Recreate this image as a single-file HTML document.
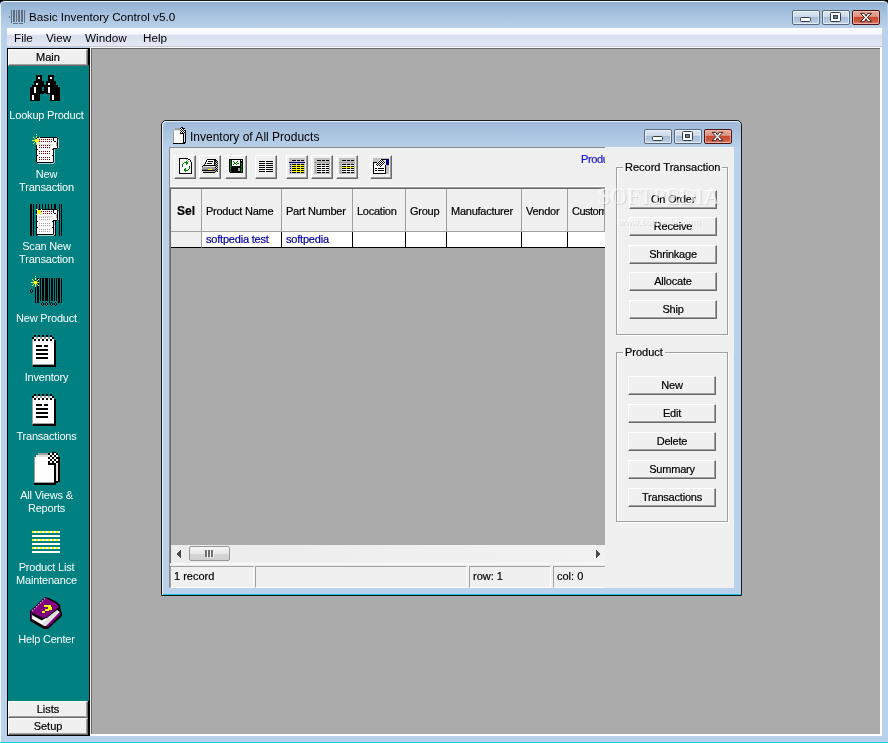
<!DOCTYPE html>
<html><head><meta charset="utf-8">
<style>
*{margin:0;padding:0;box-sizing:border-box}
html,body{width:888px;height:743px;overflow:hidden;background:#000}
body{position:relative;font-family:"Liberation Sans",sans-serif;font-size:11px;color:#000}
.a{position:absolute}
.t{white-space:nowrap;will-change:transform;-webkit-text-stroke:0.2px currentColor}
#frame{left:0;top:0;width:888px;height:743px;background:#b9d1ea;border-radius:5px 5px 0 0;border-top:1px solid #141820;box-shadow:inset 1px 0 #f4f8fc, inset 0 1px #f8fbff}
#titlegrad{left:1px;top:2px;width:886px;height:26px;border-radius:4px 4px 0 0;background:linear-gradient(#92b1d2,#a6c1df 45%,#b9d1ea)}
#bottomline{left:0;top:742px;width:888px;height:1px;background:#1ecbe6}
#title{left:29px;top:10px;font-size:11.7px;-webkit-text-stroke:0 !important}
.cap{height:15px;border:1px solid #566a80;border-radius:2px;background:linear-gradient(#dde7f2 0%,#cedbeb 42%,#a8bed6 46%,#b4c9e0 80%,#c4d6ea 100%);box-shadow:inset 0 0 0 1px rgba(255,255,255,.55)}
.capx{border-color:#4a1414;background:linear-gradient(#e9ab9c 0%,#dc9282 42%,#c8472c 46%,#cd5a40 80%,#da8a78 100%);box-shadow:inset 0 0 0 1px rgba(255,200,190,.6)}
#menubar{left:7px;top:28px;width:875px;height:18px;background:linear-gradient(#fdfdff 0%,#f4f6fb 34%,#d8deee 42%,#e4e7f4 100%)}
#menuline{left:7px;top:46px;width:875px;height:1px;background:#c6c8d4}
.menu{top:31px;font-size:11.7px;-webkit-text-stroke:0 !important}
#side{left:7px;top:48px;width:83px;height:688px;background:#000}
#teal{left:8px;top:65px;width:81px;height:636px;background:#008080}
.sbtn{left:8px;width:80px;height:17px;background:#f0f0f0;border-style:solid;border-width:1px;border-color:#fff #696969 #696969 #fff;box-shadow:inset -1px -1px #a0a0a0;text-align:center;font-size:11px;line-height:14px}
.lbl{color:#fff;text-align:center;width:81px;left:6px;font-size:11px;line-height:13px;letter-spacing:-0.2px;-webkit-text-stroke:0 !important}
#mdi{left:90px;top:47px;width:792px;height:689px;background:#ababab;border-style:solid;border-width:1px 2px 2px 1px;border-color:#fafafa #fff #fff #f0f0f0;box-shadow:inset 1px 1px #6a6a6a}
/* child */
#child{left:161px;top:120px;width:581px;height:476px;background:#b9d1ea;border:1px solid #1a1a1a;border-radius:5px 5px 0 0;box-shadow:inset 1px 1px #e4eef8, inset 0 -1px #18c0e0}
#ctitlegrad{left:1px;top:1px;width:578px;height:26px;border-radius:5px 5px 0 0;background:linear-gradient(#9fbad9,#abc4e0 45%,#b9d1ea)}
#client{left:169px;top:147px;width:565px;height:441px;background:#f0f0f0;border-top:1px solid #8a8a8a;border-left:1px solid #8a8a8a}
.tb{width:22px;height:24px;background:#f0f0f0;border-style:solid;border-width:1px;border-color:#fff #696969 #696969 #fff;box-shadow:inset -1px -1px #a0a0a0}
#tbsep{left:170px;top:186px;width:435px;height:2px;background:#fff;border-bottom:1px solid #9a9a9a}
#grid{left:170px;top:188px;width:435px;height:357px;background:#ababab;border-top:1px solid #696969;border-left:1px solid #696969}
.hd{top:189px;height:43px;padding-top:1px;background:#f0f0f0;border-right:1px solid #a0a0a0;border-bottom:1px solid #a0a0a0;line-height:42px;padding-left:4px;white-space:nowrap;overflow:hidden;letter-spacing:-0.25px}
.cell{top:232px;height:16px;background:#fff;border-right:1px solid #000;border-bottom:1px solid #000;color:#0000a0;padding-left:4px;line-height:15px;white-space:nowrap;letter-spacing:-0.2px}
#hscroll{left:170px;top:545px;width:435px;height:18px;background:linear-gradient(90deg,#ececec,#f2f2f2)}
#thumb{left:189px;top:546px;width:41px;height:15px;border:1px solid #979797;border-radius:2px;background:linear-gradient(#f6f6f6 0%,#e6e6e6 50%,#d6d6d6 51%,#d0d0d0 100%)}
#sbline{left:170px;top:563px;width:436px;height:3px;background:#f0f0f0;border-top:1px solid #fff}
.sp{top:566px;height:22px;background:#f0f0f0;border-style:solid;border-width:1px;border-color:#a0a0a0 #fff #fff #a0a0a0;padding-left:3px;line-height:19px;white-space:nowrap}
#rpanel{left:605px;top:147px;width:129px;height:441px;background:#f0f0f0}
.grp{border:1px solid #a0a0a0;box-shadow:1px 1px 0 #fff inset, 1px 1px 0 #fff}
.glbl{background:#f0f0f0;padding:0 2px;font-size:11px;line-height:13px}
.btn{width:88px;height:19px;background:#f0f0f0;border-style:solid;border-width:1px;border-color:#fff #696969 #696969 #fff;box-shadow:inset -1px -1px #a0a0a0;text-align:center;line-height:16px;font-size:11px;letter-spacing:-0.2px}
.wm{color:rgba(255,255,255,.55);text-shadow:1px 1px 0 rgba(0,0,0,.10),-1px -1px 0 rgba(255,255,255,.4);white-space:nowrap}
</style></head><body>
<div class="a" id="frame"></div>
<div class="a" id="titlegrad"></div>
<div class="a" id="bottomline"></div>
<div class="a t" id="title">Basic Inventory Control v5.0</div>
<div class="a cap" style="left:792px;top:10px;width:28px"></div>
<div class="a cap" style="left:822px;top:10px;width:28px"></div>
<div class="a cap capx" style="left:852px;top:10px;width:28px"></div>
<svg class="a" style="left:792px;top:10px" width="90" height="15" viewBox="792 10 90 15">
 <rect x="800.5" y="17.5" width="10" height="4" rx="1" fill="#fff" stroke="#333c48"/>
 <rect x="830.5" y="12.5" width="10" height="9" rx="1" fill="#fff" stroke="#333c48"/>
 <rect x="833.5" y="15.5" width="4" height="3" fill="#6a7f98" stroke="#333c48"/>
 <polygon fill="#fff" stroke="#3c1c1c" stroke-width="1" stroke-linejoin="round" points="860.5,13.3 864.3,13.3 866.0,16.2 867.7,13.3 871.5,13.3 867.5,17.5 871.5,21.7 867.7,21.7 866.0,18.8 864.3,21.7 860.5,21.7 864.5,17.5"/>
</svg>
<div class="a" id="menubar"></div>
<div class="a" id="menuline"></div>
<div class="a menu t" style="left:14px">File</div>
<div class="a menu t" style="left:46px">View</div>
<div class="a menu t" style="left:85px">Window</div>
<div class="a menu t" style="left:143px">Help</div>

<div class="a" id="side"></div>
<div class="a" id="teal"></div>
<div class="a sbtn t" style="top:49px">Main</div>
<div class="a sbtn t" style="top:701px">Lists</div>
<div class="a sbtn t" style="top:718px">Setup</div>

<div class="a lbl t" style="top:109px">Lookup Product</div>
<div class="a lbl t" style="top:168px">New<br>Transaction</div>
<div class="a lbl t" style="top:240px">Scan New<br>Transaction</div>
<div class="a lbl t" style="top:312px">New Product</div>
<div class="a lbl t" style="top:371px">Inventory</div>
<div class="a lbl t" style="top:430px">Transactions</div>
<div class="a lbl t" style="top:489px">All Views &amp;<br>Reports</div>
<div class="a lbl t" style="top:561px">Product List<br>Maintenance</div>
<div class="a lbl t" style="top:633px">Help Center</div>

<div class="a" id="mdi"></div>

<div class="a" id="child"><div class="a" id="ctitlegrad"></div></div>
<div class="a t" style="left:190px;top:130px;font-size:12px;-webkit-text-stroke:0">Inventory of All Products</div>
<div class="a cap" style="left:644px;top:129px;width:28px;height:15px"></div>
<div class="a cap" style="left:674px;top:129px;width:28px;height:15px"></div>
<div class="a cap capx" style="left:704px;top:129px;width:28px;height:15px"></div>
<svg class="a" style="left:644px;top:129px" width="90" height="15" viewBox="644 129 90 15">
 <rect x="652.5" y="136.5" width="10" height="4" rx="1" fill="#fff" stroke="#333c48"/>
 <rect x="682.5" y="131.5" width="10" height="9" rx="1" fill="#fff" stroke="#333c48"/>
 <rect x="685.5" y="134.5" width="4" height="3" fill="#6a7f98" stroke="#333c48"/>
 <polygon fill="#fff" stroke="#3c1c1c" stroke-width="1" stroke-linejoin="round" points="712.0,132.3 715.8,132.3 717.5,135.2 719.2,132.3 723.0,132.3 719.0,136.5 723.0,140.7 719.2,140.7 717.5,137.8 715.8,140.7 712.0,140.7 716.0,136.5"/>
</svg>
<div class="a" id="client"></div>

<div class="a tb" style="left:174px;top:155px"></div>
<div class="a tb" style="left:199px;top:155px"></div>
<div class="a tb" style="left:225px;top:155px"></div>
<div class="a tb" style="left:255px;top:155px"></div>
<div class="a tb" style="left:286px;top:155px"></div>
<div class="a tb" style="left:311px;top:155px"></div>
<div class="a tb" style="left:336px;top:155px"></div>
<div class="a tb" style="left:370px;top:155px"></div>

<div class="a" id="tbsep"></div>
<div class="a" id="grid"></div>
<div class="a hd t" style="left:171px;width:31px;font-weight:bold;font-size:12px;text-align:center;padding:1px 0 0 0;letter-spacing:0">Sel</div>
<div class="a hd t" style="left:202px;width:80px">Product Name</div>
<div class="a hd t" style="left:282px;width:71px">Part Number</div>
<div class="a hd t" style="left:353px;width:53px">Location</div>
<div class="a hd t" style="left:406px;width:41px">Group</div>
<div class="a hd t" style="left:447px;width:75px">Manufacturer</div>
<div class="a hd t" style="left:522px;width:46px">Vendor</div>
<div class="a hd t" style="left:568px;width:37px;letter-spacing:-0.5px">Customer</div>
<div class="a cell" style="left:171px;width:31px;background:#f0f0f0;border-right:1px solid #a0a0a0;border-bottom:1px solid #000"></div>
<div class="a cell t" style="left:202px;width:80px">softpedia test</div>
<div class="a cell t" style="left:282px;width:71px">softpedia</div>
<div class="a cell" style="left:353px;width:53px"></div>
<div class="a cell" style="left:406px;width:41px"></div>
<div class="a cell" style="left:447px;width:75px"></div>
<div class="a cell" style="left:522px;width:46px"></div>
<div class="a cell" style="left:568px;width:40px"></div>

<div class="a" id="hscroll"></div>
<div class="a" id="thumb"></div>
<svg class="a" style="left:170px;top:545px" width="436" height="18" viewBox="170 545 436 18" shape-rendering="crispEdges">
 <path fill="#4a4a4a" d="M177 553h1v2h-1z M178 552h1v4h-1z M179 551h1v6h-1z M180 550h1v8h-1z"/>
 <path fill="#4a4a4a" d="M599 553h1v2h-1z M598 552h1v4h-1z M597 551h1v6h-1z M596 550h1v8h-1z"/>
 <path fill="#707070" d="M205 550h2v7h-2z M208 550h2v7h-2z M211 550h2v7h-2z"/>
 <path fill="#fafafa" d="M207 551h1v7h-1z M210 551h1v7h-1z M213 551h1v7h-1z"/>
 <path fill="#6a6a6a" d="M170 545h1v18h-1z"/>
</svg>
<div class="a" id="sbline"></div>
<div class="a sp t" style="left:170px;width:84px">1 record</div>
<div class="a sp" style="left:255px;width:212px"></div>
<div class="a sp t" style="left:469px;width:82px">row: 1</div>
<div class="a sp t" style="left:553px;width:53px">col: 0</div>

<div class="a t" style="left:581px;top:153px;color:#1010c8;letter-spacing:-0.4px">Produ</div>

<div class="a" id="rpanel"></div>
<div class="a grp" style="left:616px;top:167px;width:112px;height:168px"></div>
<div class="a glbl t" style="left:623px;top:161px">Record Transaction</div>
<div class="a btn t" style="left:629px;top:190px">On Order</div>
<div class="a btn t" style="left:629px;top:217px">Receive</div>
<div class="a btn t" style="left:629px;top:245px">Shrinkage</div>
<div class="a btn t" style="left:629px;top:272px">Allocate</div>
<div class="a btn t" style="left:629px;top:300px">Ship</div>

<div class="a grp" style="left:616px;top:352px;width:112px;height:170px"></div>
<div class="a glbl t" style="left:623px;top:346px">Product</div>
<div class="a btn t" style="left:628px;top:376px">New</div>
<div class="a btn t" style="left:628px;top:404px">Edit</div>
<div class="a btn t" style="left:628px;top:432px">Delete</div>
<div class="a btn t" style="left:628px;top:460px">Summary</div>
<div class="a btn t" style="left:628px;top:488px">Transactions</div>

<div class="a wm" style="left:598px;top:184px;font-family:'Liberation Serif',serif;font-size:22.6px">SOFTPEDIA</div>
<div class="a wm" style="left:618px;top:216px;font-size:9.6px">www.softpedia.com</div>
<svg class="a" style="left:9px;top:10px" width="17" height="15" viewBox="0 0 17 15" shape-rendering="crispEdges"><path fill="#5f6f80" d="M2 0h1v1h-1zM4 0h2v1h-2zM7 0h1v1h-1zM9 0h2v1h-2zM12 0h2v1h-2zM15 0h1v1h-1zM2 1h1v1h-1zM4 1h2v1h-2zM7 1h1v1h-1zM9 1h2v1h-2zM12 1h2v1h-2zM15 1h1v1h-1zM2 2h1v1h-1zM4 2h2v1h-2zM7 2h1v1h-1zM9 2h2v1h-2zM12 2h2v1h-2zM15 2h1v1h-1zM2 3h1v1h-1zM4 3h2v1h-2zM7 3h1v1h-1zM9 3h2v1h-2zM12 3h2v1h-2zM15 3h1v1h-1zM2 4h1v1h-1zM4 4h2v1h-2zM7 4h1v1h-1zM9 4h2v1h-2zM12 4h2v1h-2zM15 4h1v1h-1zM2 5h1v1h-1zM4 5h2v1h-2zM7 5h1v1h-1zM9 5h2v1h-2zM12 5h2v1h-2zM15 5h1v1h-1zM0 6h1v1h-1zM2 6h1v1h-1zM4 6h2v1h-2zM7 6h1v1h-1zM9 6h2v1h-2zM12 6h2v1h-2zM15 6h1v1h-1zM0 7h1v1h-1zM2 7h1v1h-1zM4 7h2v1h-2zM7 7h1v1h-1zM9 7h2v1h-2zM12 7h2v1h-2zM15 7h1v1h-1zM2 8h1v1h-1zM4 8h2v1h-2zM7 8h1v1h-1zM9 8h2v1h-2zM12 8h2v1h-2zM15 8h1v1h-1zM2 9h1v1h-1zM4 9h2v1h-2zM7 9h1v1h-1zM9 9h2v1h-2zM12 9h2v1h-2zM15 9h1v1h-1zM2 10h1v1h-1zM4 10h2v1h-2zM7 10h1v1h-1zM9 10h2v1h-2zM12 10h2v1h-2zM15 10h1v1h-1zM2 11h1v1h-1zM4 11h2v1h-2zM7 11h1v1h-1zM9 11h2v1h-2zM12 11h2v1h-2zM15 11h1v1h-1zM2 12h1v1h-1zM15 12h1v1h-1zM4 13h5v1h-5zM10 13h4v1h-4z"/></svg>
<svg class="a" style="left:30px;top:75px" width="30" height="26" viewBox="0 0 30 26" shape-rendering="crispEdges"><path fill="#000000" d="M6 0h6v1h-6zM18 0h6v1h-6zM6 1h6v1h-6zM18 1h6v1h-6zM6 2h2v1h-2zM10 2h2v1h-2zM18 2h2v1h-2zM22 2h2v1h-2zM6 3h2v1h-2zM10 3h2v1h-2zM18 3h2v1h-2zM22 3h2v1h-2zM6 4h6v1h-6zM18 4h6v1h-6zM6 5h6v1h-6zM18 5h6v1h-6zM4 6h10v1h-10zM16 6h10v1h-10zM4 7h10v1h-10zM16 7h10v1h-10zM4 8h2v1h-2zM8 8h6v1h-6zM16 8h2v1h-2zM20 8h6v1h-6zM4 9h2v1h-2zM8 9h6v1h-6zM16 9h2v1h-2zM20 9h6v1h-6zM2 10h26v1h-26zM2 11h26v1h-26zM0 12h4v1h-4zM6 12h6v1h-6zM14 12h4v1h-4zM20 12h10v1h-10zM0 13h4v1h-4zM6 13h6v1h-6zM14 13h4v1h-4zM20 13h10v1h-10zM0 14h4v1h-4zM6 14h6v1h-6zM14 14h4v1h-4zM20 14h10v1h-10zM0 15h4v1h-4zM6 15h6v1h-6zM14 15h4v1h-4zM20 15h10v1h-10zM0 16h4v1h-4zM6 16h12v1h-12zM20 16h10v1h-10zM0 17h4v1h-4zM6 17h12v1h-12zM20 17h10v1h-10zM0 18h14v1h-14zM16 18h14v1h-14zM0 19h10v1h-10zM20 19h10v1h-10zM0 20h2v1h-2zM4 20h6v1h-6zM20 20h2v1h-2zM24 20h6v1h-6zM0 21h2v1h-2zM4 21h6v1h-6zM20 21h2v1h-2zM24 21h6v1h-6zM0 22h2v1h-2zM4 22h6v1h-6zM20 22h2v1h-2zM24 22h6v1h-6zM0 23h2v1h-2zM4 23h6v1h-6zM20 23h2v1h-2zM24 23h6v1h-6zM0 24h2v1h-2zM4 24h6v1h-6zM20 24h2v1h-2zM24 24h6v1h-6zM0 25h10v1h-10zM20 25h10v1h-10z"/><path fill="#ffffff" d="M8 2h2v1h-2zM20 2h2v1h-2zM8 3h2v1h-2zM20 3h2v1h-2zM6 8h2v1h-2zM18 8h2v1h-2zM6 9h2v1h-2zM18 9h2v1h-2zM4 12h2v1h-2zM18 12h2v1h-2zM4 13h2v1h-2zM18 13h2v1h-2zM4 14h2v1h-2zM18 14h2v1h-2zM4 15h2v1h-2zM18 15h2v1h-2zM4 16h2v1h-2zM18 16h2v1h-2zM4 17h2v1h-2zM18 17h2v1h-2zM2 20h2v1h-2zM22 20h2v1h-2zM2 21h2v1h-2zM22 21h2v1h-2zM2 22h2v1h-2zM22 22h2v1h-2zM2 23h2v1h-2zM22 23h2v1h-2zM2 24h2v1h-2zM22 24h2v1h-2z"/></svg>
<svg class="a" style="left:30px;top:132px" width="30" height="33" viewBox="0 0 30 33" shape-rendering="crispEdges"><path fill="#c8f060" d="M6 2h1v1h-1zM6 4h1v1h-1zM3 5h1v1h-1zM6 5h1v1h-1zM9 5h1v1h-1zM4 6h1v1h-1zM8 6h1v1h-1zM2 8h3v1h-3zM8 8h2v1h-2zM4 10h1v1h-1zM6 10h1v1h-1zM8 10h1v1h-1zM3 11h1v1h-1zM6 11h1v1h-1zM9 11h1v1h-1zM6 12h1v1h-1z"/><path fill="#000000" d="M7 5h2v1h-2zM10 5h17v1h-17zM6 6h1v1h-1zM23 6h1v1h-1zM27 6h1v1h-1zM23 7h1v1h-1zM27 7h1v1h-1zM23 8h1v1h-1zM27 8h1v1h-1zM24 9h2v1h-2zM27 9h1v1h-1zM27 10h1v1h-1zM27 11h1v1h-1zM27 12h1v1h-1zM6 13h1v1h-1zM27 13h1v1h-1zM6 14h1v1h-1zM27 14h1v1h-1zM6 15h1v1h-1zM27 15h1v1h-1zM6 16h1v1h-1zM23 16h4v1h-4zM6 17h2v1h-2zM22 17h2v1h-2zM6 18h1v1h-1zM23 18h1v1h-1zM6 19h1v1h-1zM23 19h1v1h-1zM6 20h1v1h-1zM23 20h1v1h-1zM6 21h1v1h-1zM23 21h1v1h-1zM6 22h1v1h-1zM23 22h1v1h-1zM6 23h2v1h-2zM22 23h2v1h-2zM6 24h1v1h-1zM23 24h1v1h-1zM6 25h1v1h-1zM23 25h1v1h-1zM6 26h1v1h-1zM23 26h1v1h-1zM6 27h1v1h-1zM23 27h1v1h-1zM6 28h1v1h-1zM23 28h1v1h-1zM6 29h1v1h-1zM23 29h1v1h-1zM7 30h16v1h-16z"/><path fill="#ffffff" d="M7 6h1v1h-1zM9 6h14v1h-14zM24 6h3v1h-3zM8 7h1v1h-1zM10 7h1v1h-1zM12 7h1v1h-1zM14 7h1v1h-1zM16 7h1v1h-1zM18 7h1v1h-1zM20 7h1v1h-1zM22 7h1v1h-1zM24 7h3v1h-3zM10 8h13v1h-13zM24 8h3v1h-3zM8 9h1v1h-1zM10 9h1v1h-1zM12 9h1v1h-1zM14 9h1v1h-1zM16 9h1v1h-1zM18 9h1v1h-1zM20 9h1v1h-1zM22 9h2v1h-2zM26 9h1v1h-1zM7 10h1v1h-1zM9 10h17v1h-17zM7 11h2v1h-2zM10 11h16v1h-16zM23 12h3v1h-3zM7 13h2v1h-2zM10 13h1v1h-1zM12 13h1v1h-1zM14 13h1v1h-1zM16 13h1v1h-1zM18 13h1v1h-1zM20 13h6v1h-6zM7 14h20v1h-20zM7 15h2v1h-2zM10 15h1v1h-1zM12 15h1v1h-1zM14 15h1v1h-1zM16 15h1v1h-1zM18 15h1v1h-1zM20 15h7v1h-7zM7 16h16v1h-16zM8 17h14v1h-14zM7 18h16v1h-16zM7 19h2v1h-2zM10 19h1v1h-1zM12 19h1v1h-1zM14 19h1v1h-1zM16 19h1v1h-1zM18 19h1v1h-1zM20 19h3v1h-3zM7 20h16v1h-16zM7 21h2v1h-2zM10 21h1v1h-1zM12 21h1v1h-1zM14 21h1v1h-1zM16 21h1v1h-1zM18 21h1v1h-1zM20 21h3v1h-3zM7 22h16v1h-16zM8 23h14v1h-14zM7 24h16v1h-16zM7 25h2v1h-2zM10 25h1v1h-1zM12 25h1v1h-1zM14 25h1v1h-1zM16 25h1v1h-1zM18 25h1v1h-1zM20 25h3v1h-3zM7 26h16v1h-16zM7 27h2v1h-2zM10 27h1v1h-1zM12 27h1v1h-1zM14 27h1v1h-1zM16 27h1v1h-1zM18 27h1v1h-1zM20 27h3v1h-3zM7 28h16v1h-16zM7 29h16v1h-16z"/><path fill="#ffff00" d="M5 7h3v1h-3zM5 8h3v1h-3zM5 9h3v1h-3z"/><path fill="#800000" d="M9 7h1v1h-1zM11 7h1v1h-1zM13 7h1v1h-1zM15 7h1v1h-1zM17 7h1v1h-1zM19 7h1v1h-1zM21 7h1v1h-1zM9 9h1v1h-1zM11 9h1v1h-1zM13 9h1v1h-1zM15 9h1v1h-1zM17 9h1v1h-1zM19 9h1v1h-1zM21 9h1v1h-1zM9 13h1v1h-1zM11 13h1v1h-1zM13 13h1v1h-1zM15 13h1v1h-1zM17 13h1v1h-1zM19 13h1v1h-1zM9 15h1v1h-1zM11 15h1v1h-1zM13 15h1v1h-1zM15 15h1v1h-1zM17 15h1v1h-1zM19 15h1v1h-1zM9 19h1v1h-1zM11 19h1v1h-1zM13 19h1v1h-1zM15 19h1v1h-1zM17 19h1v1h-1zM19 19h1v1h-1zM9 21h1v1h-1zM11 21h1v1h-1zM13 21h1v1h-1zM15 21h1v1h-1zM17 21h1v1h-1zM19 21h1v1h-1zM9 25h1v1h-1zM11 25h1v1h-1zM13 25h1v1h-1zM15 25h1v1h-1zM17 25h1v1h-1zM19 25h1v1h-1zM9 27h1v1h-1zM11 27h1v1h-1zM13 27h1v1h-1zM15 27h1v1h-1zM17 27h1v1h-1zM19 27h1v1h-1z"/><path fill="#a8d0d8" d="M28 7h1v1h-1zM28 8h1v1h-1zM28 9h1v1h-1zM28 10h1v1h-1zM28 11h1v1h-1zM28 12h1v1h-1zM28 13h1v1h-1zM28 14h1v1h-1zM28 15h1v1h-1zM24 17h1v1h-1zM24 18h1v1h-1zM24 19h1v1h-1zM24 20h1v1h-1zM24 21h1v1h-1zM24 22h1v1h-1zM24 23h1v1h-1zM24 24h1v1h-1zM24 25h1v1h-1zM24 26h1v1h-1zM24 27h1v1h-1zM24 28h1v1h-1zM24 29h1v1h-1zM24 30h1v1h-1zM8 31h16v1h-16z"/><path fill="#a0a0a0" d="M26 10h1v1h-1zM26 11h1v1h-1zM26 12h1v1h-1zM26 13h1v1h-1z"/><path fill="#e0e0e0" d="M7 12h16v1h-16z"/></svg>
<svg class="a" style="left:30px;top:204px" width="33" height="33" viewBox="0 0 33 33" shape-rendering="crispEdges"><path fill="#000000" d="M0 0h2v1h-2zM3 0h1v1h-1zM6 0h1v1h-1zM9 0h1v1h-1zM12 0h1v1h-1zM15 0h1v1h-1zM18 0h1v1h-1zM21 0h1v1h-1zM24 0h2v1h-2zM29 0h1v1h-1zM31 0h1v1h-1zM0 1h2v1h-2zM3 1h1v1h-1zM6 1h1v1h-1zM9 1h1v1h-1zM12 1h1v1h-1zM15 1h1v1h-1zM18 1h1v1h-1zM21 1h1v1h-1zM24 1h2v1h-2zM29 1h1v1h-1zM31 1h1v1h-1zM0 2h2v1h-2zM3 2h1v1h-1zM6 2h1v1h-1zM9 2h1v1h-1zM12 2h1v1h-1zM15 2h1v1h-1zM18 2h1v1h-1zM21 2h1v1h-1zM24 2h2v1h-2zM29 2h1v1h-1zM31 2h1v1h-1zM0 3h2v1h-2zM3 3h1v1h-1zM6 3h1v1h-1zM9 3h1v1h-1zM12 3h1v1h-1zM15 3h1v1h-1zM18 3h1v1h-1zM21 3h1v1h-1zM24 3h2v1h-2zM29 3h1v1h-1zM31 3h1v1h-1zM0 4h2v1h-2zM3 4h1v1h-1zM6 4h1v1h-1zM9 4h1v1h-1zM12 4h1v1h-1zM15 4h1v1h-1zM18 4h1v1h-1zM21 4h1v1h-1zM24 4h2v1h-2zM29 4h1v1h-1zM31 4h1v1h-1zM0 5h2v1h-2zM3 5h1v1h-1zM8 5h3v1h-3zM12 5h15v1h-15zM29 5h1v1h-1zM31 5h1v1h-1zM0 6h2v1h-2zM3 6h1v1h-1zM6 6h1v1h-1zM23 6h1v1h-1zM27 6h1v1h-1zM29 6h1v1h-1zM31 6h1v1h-1zM0 7h2v1h-2zM3 7h1v1h-1zM6 7h1v1h-1zM23 7h1v1h-1zM27 7h1v1h-1zM29 7h1v1h-1zM31 7h1v1h-1zM0 8h2v1h-2zM3 8h1v1h-1zM6 8h1v1h-1zM23 8h1v1h-1zM27 8h1v1h-1zM29 8h1v1h-1zM31 8h1v1h-1zM0 9h2v1h-2zM3 9h1v1h-1zM6 9h1v1h-1zM24 9h2v1h-2zM27 9h1v1h-1zM29 9h1v1h-1zM31 9h1v1h-1zM0 10h2v1h-2zM3 10h1v1h-1zM27 10h1v1h-1zM29 10h1v1h-1zM31 10h1v1h-1zM0 11h2v1h-2zM3 11h1v1h-1zM6 11h1v1h-1zM27 11h1v1h-1zM29 11h1v1h-1zM31 11h1v1h-1zM0 12h2v1h-2zM3 12h1v1h-1zM6 12h1v1h-1zM27 12h1v1h-1zM29 12h1v1h-1zM31 12h1v1h-1zM0 13h2v1h-2zM3 13h1v1h-1zM6 13h1v1h-1zM27 13h1v1h-1zM29 13h1v1h-1zM31 13h1v1h-1zM0 14h2v1h-2zM3 14h1v1h-1zM6 14h1v1h-1zM27 14h1v1h-1zM29 14h1v1h-1zM31 14h1v1h-1zM0 15h2v1h-2zM3 15h1v1h-1zM6 15h1v1h-1zM27 15h1v1h-1zM29 15h1v1h-1zM31 15h1v1h-1zM0 16h2v1h-2zM3 16h1v1h-1zM6 16h1v1h-1zM23 16h4v1h-4zM29 16h1v1h-1zM31 16h1v1h-1zM0 17h2v1h-2zM3 17h1v1h-1zM6 17h2v1h-2zM22 17h2v1h-2zM25 17h1v1h-1zM29 17h1v1h-1zM31 17h1v1h-1zM0 18h2v1h-2zM3 18h1v1h-1zM6 18h1v1h-1zM23 18h1v1h-1zM25 18h1v1h-1zM29 18h1v1h-1zM31 18h1v1h-1zM0 19h2v1h-2zM3 19h1v1h-1zM6 19h1v1h-1zM23 19h1v1h-1zM25 19h1v1h-1zM29 19h1v1h-1zM31 19h1v1h-1zM0 20h2v1h-2zM3 20h1v1h-1zM6 20h1v1h-1zM23 20h1v1h-1zM25 20h1v1h-1zM29 20h1v1h-1zM31 20h1v1h-1zM0 21h2v1h-2zM3 21h1v1h-1zM6 21h1v1h-1zM23 21h1v1h-1zM25 21h1v1h-1zM29 21h1v1h-1zM31 21h1v1h-1zM0 22h2v1h-2zM3 22h1v1h-1zM6 22h1v1h-1zM23 22h1v1h-1zM25 22h1v1h-1zM29 22h1v1h-1zM31 22h1v1h-1zM0 23h2v1h-2zM3 23h1v1h-1zM6 23h2v1h-2zM22 23h2v1h-2zM25 23h1v1h-1zM29 23h1v1h-1zM31 23h1v1h-1zM0 24h2v1h-2zM3 24h1v1h-1zM6 24h1v1h-1zM23 24h1v1h-1zM25 24h1v1h-1zM29 24h1v1h-1zM31 24h1v1h-1zM0 25h2v1h-2zM3 25h1v1h-1zM6 25h1v1h-1zM23 25h1v1h-1zM25 25h1v1h-1zM29 25h1v1h-1zM31 25h1v1h-1zM0 26h2v1h-2zM3 26h1v1h-1zM6 26h1v1h-1zM23 26h1v1h-1zM25 26h1v1h-1zM29 26h1v1h-1zM31 26h1v1h-1zM0 27h2v1h-2zM3 27h1v1h-1zM6 27h1v1h-1zM23 27h1v1h-1zM25 27h1v1h-1zM29 27h1v1h-1zM31 27h1v1h-1zM0 28h2v1h-2zM3 28h1v1h-1zM6 28h1v1h-1zM23 28h1v1h-1zM25 28h1v1h-1zM29 28h1v1h-1zM31 28h1v1h-1zM0 29h2v1h-2zM3 29h1v1h-1zM6 29h1v1h-1zM23 29h1v1h-1zM25 29h1v1h-1zM29 29h1v1h-1zM31 29h1v1h-1zM0 30h2v1h-2zM3 30h1v1h-1zM6 30h17v1h-17zM25 30h1v1h-1zM29 30h1v1h-1zM31 30h1v1h-1zM0 31h2v1h-2zM3 31h1v1h-1zM6 31h1v1h-1zM24 31h2v1h-2zM29 31h1v1h-1zM31 31h1v1h-1z"/><path fill="#c8f060" d="M6 5h2v1h-2zM11 5h1v1h-1zM11 9h1v1h-1zM6 10h1v1h-1zM10 10h1v1h-1z"/><path fill="#ffffff" d="M7 6h1v1h-1zM10 6h13v1h-13zM24 6h3v1h-3zM12 7h1v1h-1zM14 7h1v1h-1zM16 7h1v1h-1zM18 7h1v1h-1zM20 7h1v1h-1zM22 7h1v1h-1zM24 7h3v1h-3zM7 8h1v1h-1zM11 8h12v1h-12zM24 8h3v1h-3zM7 9h1v1h-1zM10 9h1v1h-1zM12 9h1v1h-1zM14 9h1v1h-1zM16 9h1v1h-1zM18 9h1v1h-1zM20 9h1v1h-1zM22 9h2v1h-2zM26 9h1v1h-1zM7 10h3v1h-3zM11 10h15v1h-15zM7 11h19v1h-19zM23 12h3v1h-3zM7 13h2v1h-2zM10 13h1v1h-1zM12 13h1v1h-1zM14 13h1v1h-1zM16 13h1v1h-1zM18 13h1v1h-1zM20 13h6v1h-6zM7 14h20v1h-20zM7 15h2v1h-2zM10 15h1v1h-1zM12 15h1v1h-1zM14 15h1v1h-1zM16 15h1v1h-1zM18 15h1v1h-1zM20 15h7v1h-7zM7 16h16v1h-16zM8 17h14v1h-14zM7 18h16v1h-16zM7 19h2v1h-2zM10 19h1v1h-1zM12 19h1v1h-1zM14 19h1v1h-1zM16 19h1v1h-1zM18 19h1v1h-1zM20 19h3v1h-3zM7 20h16v1h-16zM7 21h2v1h-2zM10 21h1v1h-1zM12 21h1v1h-1zM14 21h1v1h-1zM16 21h1v1h-1zM18 21h1v1h-1zM20 21h3v1h-3zM7 22h16v1h-16zM8 23h14v1h-14zM7 24h16v1h-16zM7 25h2v1h-2zM10 25h1v1h-1zM12 25h1v1h-1zM14 25h1v1h-1zM16 25h1v1h-1zM18 25h1v1h-1zM20 25h3v1h-3zM7 26h16v1h-16zM7 27h2v1h-2zM10 27h1v1h-1zM12 27h1v1h-1zM14 27h1v1h-1zM16 27h1v1h-1zM18 27h1v1h-1zM20 27h3v1h-3zM7 28h16v1h-16zM7 29h16v1h-16z"/><path fill="#ffff00" d="M8 6h2v1h-2zM7 7h4v1h-4zM8 8h3v1h-3zM8 9h2v1h-2z"/><path fill="#800000" d="M11 7h1v1h-1zM13 7h1v1h-1zM15 7h1v1h-1zM17 7h1v1h-1zM19 7h1v1h-1zM21 7h1v1h-1zM13 9h1v1h-1zM15 9h1v1h-1zM17 9h1v1h-1zM19 9h1v1h-1zM21 9h1v1h-1z"/><path fill="#a8d0d8" d="M28 7h1v1h-1zM28 8h1v1h-1zM28 9h1v1h-1zM28 10h1v1h-1zM28 11h1v1h-1zM28 12h1v1h-1zM28 13h1v1h-1zM28 14h1v1h-1zM28 15h1v1h-1zM24 17h1v1h-1zM24 18h1v1h-1zM24 19h1v1h-1zM24 20h1v1h-1zM24 21h1v1h-1zM24 22h1v1h-1zM24 23h1v1h-1zM24 24h1v1h-1zM24 25h1v1h-1zM24 26h1v1h-1zM24 27h1v1h-1zM24 28h1v1h-1zM24 29h1v1h-1zM24 30h1v1h-1zM8 31h16v1h-16z"/><path fill="#a0a0a0" d="M26 10h1v1h-1zM26 11h1v1h-1zM26 12h1v1h-1zM9 13h1v1h-1zM11 13h1v1h-1zM13 13h1v1h-1zM15 13h1v1h-1zM17 13h1v1h-1zM19 13h1v1h-1zM26 13h1v1h-1zM9 15h1v1h-1zM11 15h1v1h-1zM13 15h1v1h-1zM15 15h1v1h-1zM17 15h1v1h-1zM19 15h1v1h-1zM9 19h1v1h-1zM11 19h1v1h-1zM13 19h1v1h-1zM15 19h1v1h-1zM17 19h1v1h-1zM19 19h1v1h-1zM9 21h1v1h-1zM11 21h1v1h-1zM13 21h1v1h-1zM15 21h1v1h-1zM17 21h1v1h-1zM19 21h1v1h-1zM9 25h1v1h-1zM11 25h1v1h-1zM13 25h1v1h-1zM15 25h1v1h-1zM17 25h1v1h-1zM19 25h1v1h-1zM9 27h1v1h-1zM11 27h1v1h-1zM13 27h1v1h-1zM15 27h1v1h-1zM17 27h1v1h-1zM19 27h1v1h-1z"/><path fill="#e0e0e0" d="M7 12h16v1h-16z"/></svg>
<svg class="a" style="left:29px;top:275px" width="34" height="33" viewBox="0 0 34 33" shape-rendering="crispEdges"><path fill="#c8f060" d="M6 1h1v1h-1zM6 3h1v1h-1zM3 4h1v1h-1zM6 4h1v1h-1zM9 4h1v1h-1zM4 5h1v1h-1zM8 5h1v1h-1zM2 7h3v1h-3zM8 7h2v1h-2zM4 9h1v1h-1zM6 9h1v1h-1zM8 9h1v1h-1zM3 10h1v1h-1zM6 10h1v1h-1zM9 10h1v1h-1zM6 11h1v1h-1z"/><path fill="#000000" d="M8 3h2v1h-2zM11 3h1v1h-1zM13 3h2v1h-2zM16 3h3v1h-3zM20 3h1v1h-1zM22 3h2v1h-2zM25 3h1v1h-1zM27 3h1v1h-1zM29 3h2v1h-2zM32 3h1v1h-1zM8 4h1v1h-1zM11 4h1v1h-1zM13 4h2v1h-2zM16 4h3v1h-3zM20 4h1v1h-1zM22 4h2v1h-2zM25 4h1v1h-1zM27 4h1v1h-1zM29 4h2v1h-2zM32 4h1v1h-1zM6 5h1v1h-1zM9 5h1v1h-1zM11 5h1v1h-1zM13 5h2v1h-2zM16 5h3v1h-3zM20 5h1v1h-1zM22 5h2v1h-2zM25 5h1v1h-1zM27 5h1v1h-1zM29 5h2v1h-2zM32 5h1v1h-1zM8 6h2v1h-2zM11 6h1v1h-1zM13 6h2v1h-2zM16 6h3v1h-3zM20 6h1v1h-1zM22 6h2v1h-2zM25 6h1v1h-1zM27 6h1v1h-1zM29 6h2v1h-2zM32 6h1v1h-1zM11 7h1v1h-1zM13 7h2v1h-2zM16 7h3v1h-3zM20 7h1v1h-1zM22 7h2v1h-2zM25 7h1v1h-1zM27 7h1v1h-1zM29 7h2v1h-2zM32 7h1v1h-1zM8 8h2v1h-2zM11 8h1v1h-1zM13 8h2v1h-2zM16 8h3v1h-3zM20 8h1v1h-1zM22 8h2v1h-2zM25 8h1v1h-1zM27 8h1v1h-1zM29 8h2v1h-2zM32 8h1v1h-1zM9 9h1v1h-1zM11 9h1v1h-1zM13 9h2v1h-2zM16 9h3v1h-3zM20 9h1v1h-1zM22 9h2v1h-2zM25 9h1v1h-1zM27 9h1v1h-1zM29 9h2v1h-2zM32 9h1v1h-1zM8 10h1v1h-1zM11 10h1v1h-1zM13 10h2v1h-2zM16 10h3v1h-3zM20 10h1v1h-1zM22 10h2v1h-2zM25 10h1v1h-1zM27 10h1v1h-1zM29 10h2v1h-2zM32 10h1v1h-1zM8 11h2v1h-2zM11 11h1v1h-1zM13 11h2v1h-2zM16 11h3v1h-3zM20 11h1v1h-1zM22 11h2v1h-2zM25 11h1v1h-1zM27 11h1v1h-1zM29 11h2v1h-2zM32 11h1v1h-1zM6 12h1v1h-1zM8 12h2v1h-2zM11 12h1v1h-1zM13 12h2v1h-2zM16 12h3v1h-3zM20 12h1v1h-1zM22 12h2v1h-2zM25 12h1v1h-1zM27 12h1v1h-1zM29 12h2v1h-2zM32 12h1v1h-1zM6 13h1v1h-1zM8 13h2v1h-2zM11 13h1v1h-1zM13 13h2v1h-2zM16 13h3v1h-3zM20 13h1v1h-1zM22 13h2v1h-2zM25 13h1v1h-1zM27 13h1v1h-1zM29 13h2v1h-2zM32 13h1v1h-1zM2 14h1v1h-1zM6 14h1v1h-1zM8 14h2v1h-2zM11 14h1v1h-1zM13 14h2v1h-2zM16 14h3v1h-3zM20 14h1v1h-1zM22 14h2v1h-2zM25 14h1v1h-1zM27 14h1v1h-1zM29 14h2v1h-2zM32 14h1v1h-1zM1 15h1v1h-1zM3 15h1v1h-1zM6 15h1v1h-1zM8 15h2v1h-2zM11 15h1v1h-1zM13 15h2v1h-2zM16 15h3v1h-3zM20 15h1v1h-1zM22 15h2v1h-2zM25 15h1v1h-1zM27 15h1v1h-1zM29 15h2v1h-2zM32 15h1v1h-1zM1 16h1v1h-1zM3 16h1v1h-1zM6 16h1v1h-1zM8 16h2v1h-2zM11 16h1v1h-1zM13 16h2v1h-2zM16 16h3v1h-3zM20 16h1v1h-1zM22 16h2v1h-2zM25 16h1v1h-1zM27 16h1v1h-1zM29 16h2v1h-2zM32 16h1v1h-1zM2 17h1v1h-1zM6 17h1v1h-1zM8 17h2v1h-2zM11 17h1v1h-1zM13 17h2v1h-2zM16 17h3v1h-3zM20 17h1v1h-1zM22 17h2v1h-2zM25 17h1v1h-1zM27 17h1v1h-1zM29 17h2v1h-2zM32 17h1v1h-1zM6 18h1v1h-1zM8 18h2v1h-2zM11 18h1v1h-1zM13 18h2v1h-2zM16 18h3v1h-3zM20 18h1v1h-1zM22 18h2v1h-2zM25 18h1v1h-1zM27 18h1v1h-1zM29 18h2v1h-2zM32 18h1v1h-1zM6 19h1v1h-1zM8 19h2v1h-2zM11 19h1v1h-1zM13 19h2v1h-2zM16 19h3v1h-3zM20 19h1v1h-1zM22 19h2v1h-2zM25 19h1v1h-1zM27 19h1v1h-1zM29 19h2v1h-2zM32 19h1v1h-1zM6 20h1v1h-1zM8 20h2v1h-2zM11 20h1v1h-1zM13 20h2v1h-2zM16 20h3v1h-3zM20 20h1v1h-1zM22 20h2v1h-2zM25 20h1v1h-1zM27 20h1v1h-1zM29 20h2v1h-2zM32 20h1v1h-1zM6 21h1v1h-1zM8 21h2v1h-2zM11 21h1v1h-1zM13 21h2v1h-2zM16 21h3v1h-3zM20 21h1v1h-1zM22 21h2v1h-2zM25 21h1v1h-1zM27 21h1v1h-1zM29 21h2v1h-2zM32 21h1v1h-1zM6 22h1v1h-1zM8 22h2v1h-2zM11 22h1v1h-1zM13 22h2v1h-2zM16 22h3v1h-3zM20 22h1v1h-1zM22 22h2v1h-2zM25 22h1v1h-1zM27 22h1v1h-1zM29 22h2v1h-2zM32 22h1v1h-1zM6 23h1v1h-1zM8 23h2v1h-2zM11 23h1v1h-1zM13 23h2v1h-2zM16 23h3v1h-3zM20 23h1v1h-1zM22 23h2v1h-2zM25 23h1v1h-1zM27 23h1v1h-1zM29 23h2v1h-2zM32 23h1v1h-1zM6 24h1v1h-1zM8 24h2v1h-2zM11 24h1v1h-1zM13 24h2v1h-2zM16 24h3v1h-3zM20 24h1v1h-1zM22 24h2v1h-2zM25 24h1v1h-1zM27 24h1v1h-1zM29 24h2v1h-2zM32 24h1v1h-1zM6 25h1v1h-1zM8 25h2v1h-2zM11 25h1v1h-1zM13 25h2v1h-2zM16 25h3v1h-3zM20 25h1v1h-1zM22 25h2v1h-2zM25 25h1v1h-1zM27 25h1v1h-1zM29 25h2v1h-2zM32 25h1v1h-1zM6 26h1v1h-1zM8 26h2v1h-2zM20 26h1v1h-1zM29 26h2v1h-2zM32 26h1v1h-1zM6 27h1v1h-1zM8 27h2v1h-2zM13 27h1v1h-1zM17 27h1v1h-1zM20 27h1v1h-1zM22 27h1v1h-1zM26 27h1v1h-1zM29 27h2v1h-2zM32 27h1v1h-1zM12 28h1v1h-1zM14 28h1v1h-1zM16 28h1v1h-1zM18 28h1v1h-1zM21 28h1v1h-1zM23 28h1v1h-1zM25 28h1v1h-1zM27 28h1v1h-1zM12 29h1v1h-1zM14 29h1v1h-1zM16 29h1v1h-1zM18 29h1v1h-1zM21 29h1v1h-1zM23 29h1v1h-1zM25 29h1v1h-1zM27 29h1v1h-1zM13 30h1v1h-1zM17 30h1v1h-1zM22 30h1v1h-1zM26 30h1v1h-1z"/><path fill="#ffff00" d="M5 6h3v1h-3zM5 7h3v1h-3zM5 8h3v1h-3z"/></svg>
<svg class="a" style="left:32px;top:335px" width="25" height="33" viewBox="0 0 25 33" shape-rendering="crispEdges"><path fill="#000000" d="M2 0h2v1h-2zM6 0h2v1h-2zM10 0h2v1h-2zM14 0h2v1h-2zM18 0h2v1h-2zM2 1h2v1h-2zM6 1h2v1h-2zM10 1h2v1h-2zM14 1h2v1h-2zM18 1h2v1h-2zM0 2h2v1h-2zM20 2h2v1h-2zM0 3h2v1h-2zM20 3h2v1h-2zM2 4h2v1h-2zM6 4h2v1h-2zM10 4h2v1h-2zM14 4h2v1h-2zM18 4h2v1h-2zM2 5h2v1h-2zM6 5h2v1h-2zM10 5h2v1h-2zM14 5h2v1h-2zM18 5h2v1h-2zM22 5h2v1h-2zM22 6h2v1h-2zM22 7h2v1h-2zM22 8h2v1h-2zM22 9h2v1h-2zM4 10h6v1h-6zM12 10h4v1h-4zM22 10h2v1h-2zM4 11h6v1h-6zM12 11h4v1h-4zM22 11h2v1h-2zM22 12h2v1h-2zM22 13h2v1h-2zM4 14h12v1h-12zM22 14h2v1h-2zM4 15h12v1h-12zM22 15h2v1h-2zM22 16h2v1h-2zM22 17h2v1h-2zM4 18h12v1h-12zM22 18h2v1h-2zM4 19h12v1h-12zM22 19h2v1h-2zM22 20h2v1h-2zM22 21h2v1h-2zM4 22h12v1h-12zM22 22h2v1h-2zM4 23h12v1h-12zM22 23h2v1h-2zM22 24h2v1h-2zM22 25h2v1h-2zM22 26h2v1h-2zM22 27h2v1h-2zM22 28h2v1h-2zM22 29h2v1h-2zM1 30h23v1h-23zM1 31h23v1h-23z"/><path fill="#ffffff" d="M2 2h2v1h-2zM6 2h2v1h-2zM10 2h2v1h-2zM14 2h2v1h-2zM18 2h2v1h-2zM2 3h2v1h-2zM6 3h2v1h-2zM10 3h2v1h-2zM14 3h2v1h-2zM18 3h2v1h-2zM1 4h1v1h-1zM4 4h2v1h-2zM8 4h2v1h-2zM12 4h2v1h-2zM16 4h2v1h-2zM20 4h2v1h-2zM1 5h1v1h-1zM4 5h2v1h-2zM8 5h2v1h-2zM12 5h2v1h-2zM16 5h2v1h-2zM20 5h2v1h-2zM1 6h21v1h-21zM1 7h21v1h-21zM1 8h21v1h-21zM1 9h21v1h-21zM1 10h3v1h-3zM10 10h2v1h-2zM16 10h6v1h-6zM1 11h3v1h-3zM10 11h2v1h-2zM16 11h6v1h-6zM1 12h21v1h-21zM1 13h21v1h-21zM1 14h3v1h-3zM16 14h6v1h-6zM1 15h3v1h-3zM16 15h6v1h-6zM1 16h21v1h-21zM1 17h21v1h-21zM1 18h3v1h-3zM16 18h6v1h-6zM1 19h3v1h-3zM16 19h6v1h-6zM1 20h21v1h-21zM1 21h21v1h-21zM1 22h3v1h-3zM16 22h6v1h-6zM1 23h3v1h-3zM16 23h6v1h-6zM1 24h21v1h-21zM1 25h21v1h-21zM1 26h21v1h-21zM1 27h21v1h-21zM1 28h21v1h-21z"/><path fill="#a0a0a0" d="M4 2h2v1h-2zM8 2h2v1h-2zM12 2h2v1h-2zM16 2h2v1h-2zM4 3h2v1h-2zM8 3h2v1h-2zM12 3h2v1h-2zM16 3h2v1h-2zM0 4h1v1h-1zM0 5h1v1h-1zM0 6h1v1h-1zM0 7h1v1h-1zM0 8h1v1h-1zM0 9h1v1h-1zM0 10h1v1h-1zM0 11h1v1h-1zM0 12h1v1h-1zM0 13h1v1h-1zM0 14h1v1h-1zM0 15h1v1h-1zM0 16h1v1h-1zM0 17h1v1h-1zM0 18h1v1h-1zM0 19h1v1h-1zM0 20h1v1h-1zM0 21h1v1h-1zM0 22h1v1h-1zM0 23h1v1h-1zM0 24h1v1h-1zM0 25h1v1h-1zM0 26h1v1h-1zM0 27h1v1h-1zM0 28h1v1h-1zM0 29h22v1h-22z"/></svg>
<svg class="a" style="left:32px;top:394px" width="25" height="33" viewBox="0 0 25 33" shape-rendering="crispEdges"><path fill="#000000" d="M2 0h2v1h-2zM6 0h2v1h-2zM10 0h2v1h-2zM14 0h2v1h-2zM18 0h2v1h-2zM2 1h2v1h-2zM6 1h2v1h-2zM10 1h2v1h-2zM14 1h2v1h-2zM18 1h2v1h-2zM0 2h2v1h-2zM20 2h2v1h-2zM0 3h2v1h-2zM20 3h2v1h-2zM2 4h2v1h-2zM6 4h2v1h-2zM10 4h2v1h-2zM14 4h2v1h-2zM18 4h2v1h-2zM2 5h2v1h-2zM6 5h2v1h-2zM10 5h2v1h-2zM14 5h2v1h-2zM18 5h2v1h-2zM22 5h2v1h-2zM22 6h2v1h-2zM22 7h2v1h-2zM22 8h2v1h-2zM22 9h2v1h-2zM4 10h6v1h-6zM12 10h4v1h-4zM22 10h2v1h-2zM4 11h6v1h-6zM12 11h4v1h-4zM22 11h2v1h-2zM22 12h2v1h-2zM22 13h2v1h-2zM4 14h12v1h-12zM22 14h2v1h-2zM4 15h12v1h-12zM22 15h2v1h-2zM22 16h2v1h-2zM22 17h2v1h-2zM4 18h12v1h-12zM22 18h2v1h-2zM4 19h12v1h-12zM22 19h2v1h-2zM22 20h2v1h-2zM22 21h2v1h-2zM4 22h12v1h-12zM22 22h2v1h-2zM4 23h12v1h-12zM22 23h2v1h-2zM22 24h2v1h-2zM22 25h2v1h-2zM22 26h2v1h-2zM22 27h2v1h-2zM22 28h2v1h-2zM22 29h2v1h-2zM1 30h23v1h-23zM1 31h23v1h-23z"/><path fill="#ffffff" d="M2 2h2v1h-2zM6 2h2v1h-2zM10 2h2v1h-2zM14 2h2v1h-2zM18 2h2v1h-2zM2 3h2v1h-2zM6 3h2v1h-2zM10 3h2v1h-2zM14 3h2v1h-2zM18 3h2v1h-2zM1 4h1v1h-1zM4 4h2v1h-2zM8 4h2v1h-2zM12 4h2v1h-2zM16 4h2v1h-2zM20 4h2v1h-2zM1 5h1v1h-1zM4 5h2v1h-2zM8 5h2v1h-2zM12 5h2v1h-2zM16 5h2v1h-2zM20 5h2v1h-2zM1 6h21v1h-21zM1 7h21v1h-21zM1 8h21v1h-21zM1 9h21v1h-21zM1 10h3v1h-3zM10 10h2v1h-2zM16 10h6v1h-6zM1 11h3v1h-3zM10 11h2v1h-2zM16 11h6v1h-6zM1 12h21v1h-21zM1 13h21v1h-21zM1 14h3v1h-3zM16 14h6v1h-6zM1 15h3v1h-3zM16 15h6v1h-6zM1 16h21v1h-21zM1 17h21v1h-21zM1 18h3v1h-3zM16 18h6v1h-6zM1 19h3v1h-3zM16 19h6v1h-6zM1 20h21v1h-21zM1 21h21v1h-21zM1 22h3v1h-3zM16 22h6v1h-6zM1 23h3v1h-3zM16 23h6v1h-6zM1 24h21v1h-21zM1 25h21v1h-21zM1 26h21v1h-21zM1 27h21v1h-21zM1 28h21v1h-21z"/><path fill="#a0a0a0" d="M4 2h2v1h-2zM8 2h2v1h-2zM12 2h2v1h-2zM16 2h2v1h-2zM4 3h2v1h-2zM8 3h2v1h-2zM12 3h2v1h-2zM16 3h2v1h-2zM0 4h1v1h-1zM0 5h1v1h-1zM0 6h1v1h-1zM0 7h1v1h-1zM0 8h1v1h-1zM0 9h1v1h-1zM0 10h1v1h-1zM0 11h1v1h-1zM0 12h1v1h-1zM0 13h1v1h-1zM0 14h1v1h-1zM0 15h1v1h-1zM0 16h1v1h-1zM0 17h1v1h-1zM0 18h1v1h-1zM0 19h1v1h-1zM0 20h1v1h-1zM0 21h1v1h-1zM0 22h1v1h-1zM0 23h1v1h-1zM0 24h1v1h-1zM0 25h1v1h-1zM0 26h1v1h-1zM0 27h1v1h-1zM0 28h1v1h-1zM0 29h22v1h-22z"/></svg>
<svg class="a" style="left:33px;top:452px" width="28" height="34" viewBox="0 0 28 34" shape-rendering="crispEdges"><path fill="#000000" d="M19 0h4v1h-4zM15 1h2v1h-2zM19 1h2v1h-2zM23 1h2v1h-2zM15 2h2v1h-2zM19 2h2v1h-2zM23 2h2v1h-2zM17 3h2v1h-2zM21 3h2v1h-2zM17 4h2v1h-2zM21 4h2v1h-2zM15 5h2v1h-2zM19 5h2v1h-2zM23 5h4v1h-4zM15 6h2v1h-2zM19 6h2v1h-2zM23 6h4v1h-4zM17 7h2v1h-2zM21 7h2v1h-2zM25 7h2v1h-2zM17 8h2v1h-2zM21 8h2v1h-2zM25 8h2v1h-2zM15 9h2v1h-2zM19 9h2v1h-2zM23 9h4v1h-4zM15 10h2v1h-2zM19 10h2v1h-2zM23 10h4v1h-4zM15 11h8v1h-8zM25 11h2v1h-2zM15 12h8v1h-8zM25 12h2v1h-2zM21 13h2v1h-2zM25 13h2v1h-2zM21 14h2v1h-2zM25 14h2v1h-2zM21 15h2v1h-2zM25 15h2v1h-2zM21 16h2v1h-2zM25 16h2v1h-2zM21 17h2v1h-2zM25 17h2v1h-2zM21 18h2v1h-2zM25 18h2v1h-2zM21 19h2v1h-2zM25 19h2v1h-2zM21 20h2v1h-2zM25 20h2v1h-2zM21 21h2v1h-2zM25 21h2v1h-2zM21 22h2v1h-2zM25 22h2v1h-2zM21 23h2v1h-2zM25 23h2v1h-2zM21 24h2v1h-2zM25 24h2v1h-2zM21 25h2v1h-2zM25 25h2v1h-2zM21 26h2v1h-2zM25 26h2v1h-2zM21 27h2v1h-2zM25 27h2v1h-2zM21 28h2v1h-2zM25 28h2v1h-2zM21 29h6v1h-6zM21 30h4v1h-4zM1 31h22v1h-22zM1 32h22v1h-22z"/><path fill="#a0a0a0" d="M5 1h10v1h-10zM5 2h10v1h-10zM1 5h1v1h-1zM1 6h1v1h-1zM1 7h1v1h-1zM1 8h1v1h-1zM1 9h1v1h-1zM1 10h1v1h-1zM1 11h1v1h-1zM1 12h1v1h-1zM1 13h1v1h-1zM1 14h1v1h-1zM1 15h1v1h-1zM1 16h1v1h-1zM1 17h1v1h-1zM1 18h1v1h-1zM1 19h1v1h-1zM1 20h1v1h-1zM1 21h1v1h-1zM1 22h1v1h-1zM1 23h1v1h-1zM1 24h1v1h-1zM1 25h1v1h-1zM1 26h1v1h-1zM1 27h1v1h-1zM1 28h1v1h-1zM1 29h1v1h-1zM1 30h20v1h-20z"/><path fill="#ffffff" d="M17 1h2v1h-2zM21 1h2v1h-2zM17 2h2v1h-2zM21 2h2v1h-2zM15 3h2v1h-2zM19 3h2v1h-2zM23 3h2v1h-2zM15 4h2v1h-2zM19 4h2v1h-2zM23 4h2v1h-2zM2 5h13v1h-13zM17 5h2v1h-2zM21 5h2v1h-2zM2 6h13v1h-13zM17 6h2v1h-2zM21 6h2v1h-2zM2 7h15v1h-15zM19 7h2v1h-2zM23 7h2v1h-2zM2 8h15v1h-15zM19 8h2v1h-2zM23 8h2v1h-2zM2 9h13v1h-13zM17 9h2v1h-2zM21 9h2v1h-2zM2 10h13v1h-13zM17 10h2v1h-2zM21 10h2v1h-2zM2 11h13v1h-13zM23 11h2v1h-2zM2 12h13v1h-13zM2 13h19v1h-19zM2 14h19v1h-19zM2 15h19v1h-19zM2 16h19v1h-19zM2 17h19v1h-19zM2 18h19v1h-19zM2 19h19v1h-19zM2 20h19v1h-19zM2 21h19v1h-19zM2 22h19v1h-19zM2 23h19v1h-19zM2 24h19v1h-19zM2 25h19v1h-19zM2 26h19v1h-19zM2 27h19v1h-19zM2 28h19v1h-19zM2 29h19v1h-19z"/><path fill="#e0e0e0" d="M3 3h12v1h-12zM3 4h12v1h-12zM23 12h2v1h-2zM23 13h2v1h-2zM23 14h2v1h-2zM23 15h2v1h-2zM23 16h2v1h-2zM23 17h2v1h-2zM23 18h2v1h-2zM23 19h2v1h-2zM23 20h2v1h-2zM23 21h2v1h-2zM23 22h2v1h-2zM23 23h2v1h-2zM23 24h2v1h-2zM23 25h2v1h-2zM23 26h2v1h-2zM23 27h2v1h-2zM23 28h2v1h-2z"/></svg>
<svg class="a" style="left:32px;top:531px" width="28" height="22" viewBox="0 0 28 22" shape-rendering="crispEdges"><path fill="#ffff00" d="M0 0h2v1h-2zM4 0h2v1h-2zM8 0h2v1h-2zM12 0h2v1h-2zM16 0h2v1h-2zM20 0h2v1h-2zM24 0h2v1h-2zM0 1h2v1h-2zM4 1h2v1h-2zM8 1h2v1h-2zM12 1h2v1h-2zM16 1h2v1h-2zM20 1h2v1h-2zM24 1h2v1h-2zM0 8h2v1h-2zM4 8h2v1h-2zM8 8h2v1h-2zM12 8h2v1h-2zM16 8h2v1h-2zM20 8h2v1h-2zM24 8h2v1h-2zM0 9h2v1h-2zM4 9h2v1h-2zM8 9h2v1h-2zM12 9h2v1h-2zM16 9h2v1h-2zM20 9h2v1h-2zM24 9h2v1h-2zM0 16h2v1h-2zM4 16h2v1h-2zM8 16h2v1h-2zM12 16h2v1h-2zM16 16h2v1h-2zM20 16h2v1h-2zM24 16h2v1h-2zM0 17h2v1h-2zM4 17h2v1h-2zM8 17h2v1h-2zM12 17h2v1h-2zM16 17h2v1h-2zM20 17h2v1h-2zM24 17h2v1h-2z"/><path fill="#ffffff" d="M2 0h2v1h-2zM6 0h2v1h-2zM10 0h2v1h-2zM14 0h2v1h-2zM18 0h2v1h-2zM22 0h2v1h-2zM26 0h2v1h-2zM2 1h2v1h-2zM6 1h2v1h-2zM10 1h2v1h-2zM14 1h2v1h-2zM18 1h2v1h-2zM22 1h2v1h-2zM26 1h2v1h-2zM0 4h28v1h-28zM0 5h28v1h-28zM2 8h2v1h-2zM6 8h2v1h-2zM10 8h2v1h-2zM14 8h2v1h-2zM18 8h2v1h-2zM22 8h2v1h-2zM26 8h2v1h-2zM2 9h2v1h-2zM6 9h2v1h-2zM10 9h2v1h-2zM14 9h2v1h-2zM18 9h2v1h-2zM22 9h2v1h-2zM26 9h2v1h-2zM0 12h28v1h-28zM0 13h28v1h-28zM2 16h2v1h-2zM6 16h2v1h-2zM10 16h2v1h-2zM14 16h2v1h-2zM18 16h2v1h-2zM22 16h2v1h-2zM26 16h2v1h-2zM2 17h2v1h-2zM6 17h2v1h-2zM10 17h2v1h-2zM14 17h2v1h-2zM18 17h2v1h-2zM22 17h2v1h-2zM26 17h2v1h-2zM0 20h28v1h-28zM0 21h28v1h-28z"/></svg>
<svg class="a" style="left:28px;top:595px" width="36" height="36" viewBox="28 595 36 36"><polygon fill="#000" points="45,597 49,598 57,602 60,605 61,611 62,613 62,616 48,629 44,629 30,621 30,611"/><polygon fill="#800080" points="45,598 56,603 59,607 47,617 43,618 31,612 31,611"/><polygon fill="#e0e0e0" points="32,615 43,621 57,610 60,612 47,626 44,626 32,619"/><polygon fill="#fff" points="33,617 41,621 46,618 47,619 42,624 33,619"/><polygon fill="#800080" points="60,612 61,614 48,627 46,626"/><polygon fill="#800080" points="31,612 32,613 32,619 31,619"/><path stroke="#d8a8d8" stroke-width="1.2" stroke-dasharray="1.4 1.4" fill="none" d="M32 611 L45 598.5"/><path fill="#ffff00" d="M44 605h7v2h-7z M48 607h4v3h-4z M45 609h4v2h-4z M42 611h3v2h-3z"/></svg>
<svg class="a" style="left:179px;top:158px" width="13" height="16" viewBox="0 0 13 16" shape-rendering="crispEdges"><path fill="#000000" d="M0 0h9v1h-9zM0 1h1v1h-1zM9 1h2v1h-2zM0 2h1v1h-1zM11 2h1v1h-1zM0 3h1v1h-1zM11 3h1v1h-1zM0 4h1v1h-1zM12 4h1v1h-1zM0 5h1v1h-1zM12 5h1v1h-1zM0 6h1v1h-1zM12 6h1v1h-1zM0 7h1v1h-1zM12 7h1v1h-1zM0 8h1v1h-1zM12 8h1v1h-1zM0 9h1v1h-1zM12 9h1v1h-1zM0 10h1v1h-1zM12 10h1v1h-1zM0 11h1v1h-1zM12 11h1v1h-1zM0 12h1v1h-1zM12 12h1v1h-1zM0 13h1v1h-1zM12 13h1v1h-1zM0 14h1v1h-1zM12 14h1v1h-1zM0 15h13v1h-13z"/><path fill="#ffffff" d="M1 1h6v1h-6zM8 1h1v1h-1zM11 1h1v1h-1zM1 2h7v1h-7zM9 2h2v1h-2zM1 3h6v1h-6zM8 3h1v1h-1zM10 3h1v1h-1zM1 4h4v1h-4zM9 4h3v1h-3zM1 5h3v1h-3zM5 5h2v1h-2zM9 5h3v1h-3zM1 6h2v1h-2zM4 6h3v1h-3zM8 6h4v1h-4zM1 7h2v1h-2zM4 7h8v1h-8zM1 8h2v1h-2zM4 8h6v1h-6zM11 8h1v1h-1zM1 9h9v1h-9zM11 9h1v1h-1zM1 10h5v1h-5zM7 10h3v1h-3zM11 10h1v1h-1zM1 11h4v1h-4zM7 11h2v1h-2zM10 11h2v1h-2zM1 12h4v1h-4zM9 12h3v1h-3zM1 13h5v1h-5zM7 13h5v1h-5zM1 14h11v1h-11z"/><path fill="#a0a0a0" d="M7 1h1v1h-1zM8 2h1v1h-1zM9 3h1v1h-1z"/><path fill="#008000" d="M7 3h1v1h-1zM5 4h4v1h-4zM4 5h1v1h-1zM7 5h2v1h-2zM3 6h1v1h-1zM7 6h1v1h-1zM3 7h1v1h-1zM3 8h1v1h-1zM10 8h1v1h-1zM10 9h1v1h-1zM6 10h1v1h-1zM10 10h1v1h-1zM5 11h2v1h-2zM9 11h1v1h-1zM5 12h4v1h-4zM6 13h1v1h-1z"/></svg>
<svg class="a" style="left:201px;top:158px" width="18" height="16" viewBox="0 0 18 16" shape-rendering="crispEdges"><path fill="#000000" d="M6 1h9v1h-9zM5 2h1v1h-1zM13 2h3v1h-3zM5 3h1v1h-1zM7 3h5v1h-5zM13 3h2v1h-2zM16 3h1v1h-1zM4 4h1v1h-1zM13 4h1v1h-1zM15 4h1v1h-1zM4 5h1v1h-1zM6 5h5v1h-5zM13 5h2v1h-2zM16 5h1v1h-1zM3 6h1v1h-1zM13 6h1v1h-1zM15 6h1v1h-1zM2 7h13v1h-13zM16 7h1v1h-1zM1 8h1v1h-1zM15 8h1v1h-1zM14 9h1v1h-1zM16 9h1v1h-1zM15 10h1v1h-1zM14 11h1v1h-1zM16 11h1v1h-1zM1 12h13v1h-13zM15 12h1v1h-1zM14 13h1v1h-1zM16 13h1v1h-1zM2 14h12v1h-12z"/><path fill="#ffffff" d="M6 2h7v1h-7zM6 3h1v1h-1zM12 3h1v1h-1zM5 4h8v1h-8zM5 5h1v1h-1zM11 5h2v1h-2zM15 5h1v1h-1zM4 6h1v1h-1zM6 6h7v1h-7zM15 9h1v1h-1z"/><path fill="#a0a0a0" d="M15 3h1v1h-1zM14 4h1v1h-1zM16 4h1v1h-1zM14 6h1v1h-1zM16 6h1v1h-1zM15 7h1v1h-1zM14 8h1v1h-1zM16 8h1v1h-1zM1 9h13v1h-13zM1 10h14v1h-14zM16 10h1v1h-1zM15 11h1v1h-1zM14 12h1v1h-1zM16 12h1v1h-1zM15 13h1v1h-1z"/><path fill="#e0e0e0" d="M2 8h12v1h-12z"/><path fill="#808080" d="M1 11h6v1h-6zM11 11h3v1h-3z"/><path fill="#ffff00" d="M7 11h4v1h-4z"/><path fill="#c0c0c0" d="M2 13h12v1h-12z"/></svg>
<svg class="a" style="left:229px;top:159px" width="14" height="14" viewBox="0 0 14 14" shape-rendering="crispEdges"><path fill="#000000" d="M0 0h14v1h-14zM0 1h1v1h-1zM2 1h1v1h-1zM11 1h1v1h-1zM13 1h1v1h-1zM0 2h1v1h-1zM2 2h1v1h-1zM11 2h3v1h-3zM0 3h1v1h-1zM2 3h1v1h-1zM11 3h3v1h-3zM0 4h1v1h-1zM2 4h1v1h-1zM11 4h1v1h-1zM13 4h1v1h-1zM0 5h1v1h-1zM2 5h1v1h-1zM11 5h1v1h-1zM13 5h1v1h-1zM0 6h1v1h-1zM2 6h1v1h-1zM11 6h1v1h-1zM13 6h1v1h-1zM0 7h1v1h-1zM3 7h9v1h-9zM13 7h1v1h-1zM0 8h1v1h-1zM2 8h10v1h-10zM13 8h1v1h-1zM0 9h1v1h-1zM2 9h7v1h-7zM11 9h1v1h-1zM13 9h1v1h-1zM0 10h1v1h-1zM2 10h7v1h-7zM11 10h1v1h-1zM13 10h1v1h-1zM0 11h1v1h-1zM2 11h7v1h-7zM11 11h1v1h-1zM13 11h1v1h-1zM0 12h1v1h-1zM2 12h10v1h-10zM13 12h1v1h-1zM1 13h13v1h-13z"/><path fill="#008000" d="M1 1h1v1h-1zM1 2h1v1h-1zM4 2h1v1h-1zM8 2h1v1h-1zM1 3h1v1h-1zM5 3h1v1h-1zM7 3h1v1h-1zM1 4h1v1h-1zM5 4h2v1h-2zM8 4h2v1h-2zM12 4h1v1h-1zM1 5h1v1h-1zM4 5h1v1h-1zM7 5h1v1h-1zM12 5h1v1h-1zM1 6h1v1h-1zM12 6h1v1h-1zM1 7h2v1h-2zM12 7h1v1h-1zM1 8h1v1h-1zM12 8h1v1h-1zM1 9h1v1h-1zM12 9h1v1h-1zM1 10h1v1h-1zM12 10h1v1h-1zM1 11h1v1h-1zM12 11h1v1h-1zM1 12h1v1h-1zM12 12h1v1h-1z"/><path fill="#ffffff" d="M3 1h8v1h-8zM12 1h1v1h-1zM3 2h1v1h-1zM5 2h3v1h-3zM9 2h2v1h-2zM3 3h2v1h-2zM6 3h1v1h-1zM8 3h3v1h-3zM3 4h2v1h-2zM7 4h1v1h-1zM10 4h1v1h-1zM3 5h1v1h-1zM5 5h2v1h-2zM8 5h3v1h-3zM3 6h8v1h-8z"/><path fill="#a0a0a0" d="M9 9h2v1h-2zM9 10h2v1h-2zM9 11h2v1h-2zM0 13h1v1h-1z"/></svg>
<svg class="a" style="left:259px;top:161px" width="14" height="11" viewBox="0 0 14 11" shape-rendering="crispEdges"><path fill="#000000" d="M0 0h6v1h-6zM7 0h7v1h-7zM0 2h6v1h-6zM7 2h7v1h-7zM0 4h6v1h-6zM7 4h7v1h-7zM0 6h6v1h-6zM7 6h7v1h-7zM0 8h6v1h-6zM7 8h7v1h-7zM0 10h6v1h-6zM7 10h7v1h-7z"/></svg>
<svg class="a" style="left:289px;top:158px" width="16" height="16" viewBox="0 0 16 16" shape-rendering="crispEdges"><path fill="#c0c0c0" d="M0 0h16v1h-16zM0 1h16v1h-16zM0 2h3v1h-3zM7 2h1v1h-1zM11 2h1v1h-1zM15 2h1v1h-1zM0 3h16v1h-16zM0 5h16v1h-16zM0 6h1v1h-1zM2 6h1v1h-1zM7 6h1v1h-1zM11 6h1v1h-1zM15 6h1v1h-1zM0 7h3v1h-3zM15 7h1v1h-1zM0 8h1v1h-1zM2 8h1v1h-1zM7 8h1v1h-1zM11 8h1v1h-1zM15 8h1v1h-1zM0 9h3v1h-3zM15 9h1v1h-1zM0 10h1v1h-1zM2 10h1v1h-1zM7 10h1v1h-1zM11 10h1v1h-1zM15 10h1v1h-1zM0 11h3v1h-3zM15 11h1v1h-1zM0 12h1v1h-1zM2 12h1v1h-1zM7 12h1v1h-1zM11 12h1v1h-1zM15 12h1v1h-1zM0 13h3v1h-3zM15 13h1v1h-1zM0 14h1v1h-1zM2 14h1v1h-1zM7 14h1v1h-1zM11 14h1v1h-1zM15 14h1v1h-1zM0 15h16v1h-16z"/><path fill="#000000" d="M3 2h4v1h-4zM8 2h3v1h-3zM12 2h3v1h-3zM3 6h4v1h-4zM8 6h3v1h-3zM12 6h3v1h-3zM3 8h4v1h-4zM8 8h3v1h-3zM12 8h3v1h-3zM3 10h4v1h-4zM8 10h3v1h-3zM12 10h3v1h-3zM3 12h4v1h-4zM8 12h3v1h-3zM12 12h3v1h-3zM3 14h4v1h-4zM8 14h3v1h-3zM12 14h3v1h-3z"/><path fill="#000080" d="M0 4h16v1h-16zM1 6h1v1h-1zM1 8h1v1h-1zM1 10h1v1h-1zM1 12h1v1h-1zM1 14h1v1h-1z"/><path fill="#ffff00" d="M3 7h12v1h-12zM3 9h12v1h-12zM3 11h12v1h-12zM3 13h12v1h-12z"/></svg>
<svg class="a" style="left:314px;top:158px" width="16" height="16" viewBox="0 0 16 16" shape-rendering="crispEdges"><path fill="#c0c0c0" d="M0 0h16v1h-16zM0 1h16v1h-16zM0 2h3v1h-3zM7 2h1v1h-1zM11 2h1v1h-1zM15 2h1v1h-1zM0 3h16v1h-16zM0 5h16v1h-16zM0 6h1v1h-1zM2 6h1v1h-1zM7 6h1v1h-1zM11 6h1v1h-1zM15 6h1v1h-1zM0 7h3v1h-3zM15 7h1v1h-1zM0 8h1v1h-1zM2 8h1v1h-1zM7 8h1v1h-1zM11 8h1v1h-1zM15 8h1v1h-1zM0 9h3v1h-3zM15 9h1v1h-1zM0 10h1v1h-1zM2 10h1v1h-1zM7 10h1v1h-1zM11 10h1v1h-1zM15 10h1v1h-1zM0 11h3v1h-3zM15 11h1v1h-1zM0 12h1v1h-1zM2 12h1v1h-1zM7 12h1v1h-1zM11 12h1v1h-1zM15 12h1v1h-1zM0 13h3v1h-3zM15 13h1v1h-1zM0 14h1v1h-1zM2 14h1v1h-1zM7 14h1v1h-1zM11 14h1v1h-1zM15 14h1v1h-1zM0 15h16v1h-16z"/><path fill="#000000" d="M3 2h4v1h-4zM8 2h3v1h-3zM12 2h3v1h-3zM3 6h4v1h-4zM8 6h3v1h-3zM12 6h3v1h-3zM3 8h4v1h-4zM8 8h3v1h-3zM12 8h3v1h-3zM3 10h4v1h-4zM8 10h3v1h-3zM12 10h3v1h-3zM3 12h4v1h-4zM8 12h3v1h-3zM12 12h3v1h-3zM3 14h4v1h-4zM8 14h3v1h-3zM12 14h3v1h-3z"/><path fill="#a0a0a0" d="M0 4h16v1h-16zM1 6h1v1h-1zM1 8h1v1h-1zM1 10h1v1h-1zM1 12h1v1h-1zM1 14h1v1h-1z"/><path fill="#ffffff" d="M3 7h12v1h-12zM3 9h12v1h-12zM3 11h12v1h-12zM3 13h12v1h-12z"/></svg>
<svg class="a" style="left:339px;top:158px" width="16" height="16" viewBox="0 0 16 16" shape-rendering="crispEdges"><path fill="#c0c0c0" d="M0 0h16v1h-16zM0 1h16v1h-16zM0 2h3v1h-3zM7 2h1v1h-1zM11 2h1v1h-1zM15 2h1v1h-1zM0 3h16v1h-16zM0 5h16v1h-16zM0 6h1v1h-1zM2 6h1v1h-1zM7 6h1v1h-1zM11 6h1v1h-1zM15 6h1v1h-1zM0 7h3v1h-3zM15 7h1v1h-1zM0 8h1v1h-1zM2 8h1v1h-1zM7 8h1v1h-1zM11 8h1v1h-1zM15 8h1v1h-1zM0 9h3v1h-3zM15 9h1v1h-1zM0 10h1v1h-1zM2 10h1v1h-1zM7 10h1v1h-1zM11 10h1v1h-1zM15 10h1v1h-1zM0 11h3v1h-3zM15 11h1v1h-1zM0 12h1v1h-1zM2 12h1v1h-1zM7 12h1v1h-1zM11 12h1v1h-1zM15 12h1v1h-1zM0 13h3v1h-3zM15 13h1v1h-1zM0 14h1v1h-1zM2 14h1v1h-1zM7 14h1v1h-1zM11 14h1v1h-1zM15 14h1v1h-1zM0 15h16v1h-16z"/><path fill="#000000" d="M3 2h4v1h-4zM8 2h3v1h-3zM12 2h3v1h-3zM3 6h4v1h-4zM8 6h3v1h-3zM12 6h3v1h-3zM3 8h4v1h-4zM8 8h3v1h-3zM12 8h3v1h-3zM3 10h4v1h-4zM8 10h3v1h-3zM12 10h3v1h-3zM3 12h4v1h-4zM8 12h3v1h-3zM12 12h3v1h-3zM3 14h4v1h-4zM8 14h3v1h-3zM12 14h3v1h-3z"/><path fill="#a0a0a0" d="M0 4h16v1h-16zM1 6h1v1h-1zM1 8h1v1h-1zM1 10h1v1h-1zM1 12h1v1h-1zM1 14h1v1h-1z"/><path fill="#ffffff" d="M3 7h12v1h-12zM3 11h12v1h-12zM3 13h12v1h-12z"/><path fill="#ffff00" d="M3 9h12v1h-12z"/></svg>
<svg class="a" style="left:373px;top:158px" width="16" height="16" viewBox="0 0 16 16" shape-rendering="crispEdges"><path fill="#c0c0c0" d="M0 0h16v1h-16zM0 1h7v1h-7zM0 2h6v1h-6zM0 3h5v1h-5zM13 7h3v1h-3zM13 8h3v1h-3zM13 9h3v1h-3zM13 10h3v1h-3zM13 11h3v1h-3zM13 12h3v1h-3zM13 13h3v1h-3zM13 14h3v1h-3zM13 15h3v1h-3z"/><path fill="#ffffff" d="M7 1h1v1h-1zM6 2h1v1h-1zM8 2h1v1h-1zM5 3h1v1h-1zM7 3h1v1h-1zM9 3h1v1h-1zM4 4h1v1h-1zM6 4h1v1h-1zM8 4h1v1h-1zM10 4h1v1h-1zM1 5h3v1h-3zM5 5h1v1h-1zM7 5h1v1h-1zM9 5h1v1h-1zM11 5h1v1h-1zM1 6h2v1h-2zM4 6h1v1h-1zM6 6h1v1h-1zM8 6h1v1h-1zM10 6h1v1h-1zM1 7h3v1h-3zM5 7h1v1h-1zM7 7h1v1h-1zM9 7h3v1h-3zM1 8h6v1h-6zM8 8h4v1h-4zM1 9h11v1h-11zM1 10h1v1h-1zM4 10h1v1h-1zM11 10h1v1h-1zM1 11h11v1h-11zM1 12h1v1h-1zM4 12h1v1h-1zM11 12h1v1h-1zM1 13h11v1h-11zM1 14h11v1h-11z"/><path fill="#000000" d="M8 1h5v1h-5zM7 2h1v1h-1zM9 2h1v1h-1zM6 3h1v1h-1zM8 3h1v1h-1zM10 3h1v1h-1zM0 4h4v1h-4zM5 4h1v1h-1zM7 4h1v1h-1zM9 4h1v1h-1zM11 4h1v1h-1zM0 5h1v1h-1zM4 5h1v1h-1zM6 5h1v1h-1zM8 5h1v1h-1zM10 5h1v1h-1zM0 6h1v1h-1zM3 6h1v1h-1zM5 6h1v1h-1zM7 6h1v1h-1zM9 6h1v1h-1zM0 7h1v1h-1zM4 7h1v1h-1zM6 7h1v1h-1zM8 7h1v1h-1zM12 7h1v1h-1zM0 8h1v1h-1zM7 8h1v1h-1zM12 8h1v1h-1zM0 9h1v1h-1zM12 9h1v1h-1zM0 10h1v1h-1zM2 10h2v1h-2zM5 10h6v1h-6zM12 10h1v1h-1zM0 11h1v1h-1zM12 11h1v1h-1zM0 12h1v1h-1zM2 12h2v1h-2zM5 12h6v1h-6zM12 12h1v1h-1zM0 13h1v1h-1zM12 13h1v1h-1zM0 14h1v1h-1zM12 14h1v1h-1zM0 15h13v1h-13z"/><path fill="#000080" d="M13 1h3v1h-3zM13 2h3v1h-3zM13 3h3v1h-3zM13 4h3v1h-3zM13 5h3v1h-3zM13 6h3v1h-3z"/><path fill="#e0e0e0" d="M10 2h3v1h-3zM11 3h2v1h-2zM12 4h1v1h-1zM12 5h1v1h-1zM11 6h2v1h-2z"/></svg>
<svg class="a" style="left:173px;top:127px" width="14" height="18" viewBox="0 0 14 18" shape-rendering="crispEdges"><path fill="#000000" d="M8 0h2v1h-2zM7 1h1v1h-1zM9 1h3v1h-3zM8 2h1v1h-1zM10 2h1v1h-1zM7 3h1v1h-1zM9 3h1v1h-1zM11 3h2v1h-2zM8 4h1v1h-1zM10 4h1v1h-1zM12 4h1v1h-1zM7 5h1v1h-1zM9 5h1v1h-1zM11 5h2v1h-2zM7 6h4v1h-4zM12 6h1v1h-1zM10 7h1v1h-1zM12 7h1v1h-1zM10 8h1v1h-1zM12 8h1v1h-1zM10 9h1v1h-1zM12 9h1v1h-1zM10 10h1v1h-1zM12 10h1v1h-1zM10 11h1v1h-1zM12 11h1v1h-1zM10 12h1v1h-1zM12 12h1v1h-1zM10 13h1v1h-1zM12 13h1v1h-1zM10 14h1v1h-1zM12 14h1v1h-1zM10 15h3v1h-3zM0 16h12v1h-12z"/><path fill="#a0a0a0" d="M2 1h5v1h-5zM2 2h5v1h-5zM0 3h1v1h-1zM0 4h1v1h-1zM0 5h1v1h-1zM0 6h1v1h-1zM0 7h1v1h-1zM0 8h1v1h-1zM0 9h1v1h-1zM0 10h1v1h-1zM0 11h1v1h-1zM0 12h1v1h-1zM0 13h1v1h-1zM0 14h1v1h-1zM0 15h1v1h-1z"/><path fill="#ffffff" d="M8 1h1v1h-1zM7 2h1v1h-1zM9 2h1v1h-1zM11 2h1v1h-1zM8 3h1v1h-1zM10 3h1v1h-1zM1 4h7v1h-7zM9 4h1v1h-1zM11 4h1v1h-1zM1 5h6v1h-6zM8 5h1v1h-1zM10 5h1v1h-1zM1 6h6v1h-6zM1 7h9v1h-9zM1 8h9v1h-9zM1 9h9v1h-9zM1 10h9v1h-9zM1 11h9v1h-9zM1 12h9v1h-9zM1 13h9v1h-9zM1 14h9v1h-9zM1 15h9v1h-9z"/><path fill="#e0e0e0" d="M1 3h6v1h-6zM11 6h1v1h-1zM11 7h1v1h-1zM11 8h1v1h-1zM11 9h1v1h-1zM11 10h1v1h-1zM11 11h1v1h-1zM11 12h1v1h-1zM11 13h1v1h-1zM11 14h1v1h-1z"/></svg>
</body></html>
